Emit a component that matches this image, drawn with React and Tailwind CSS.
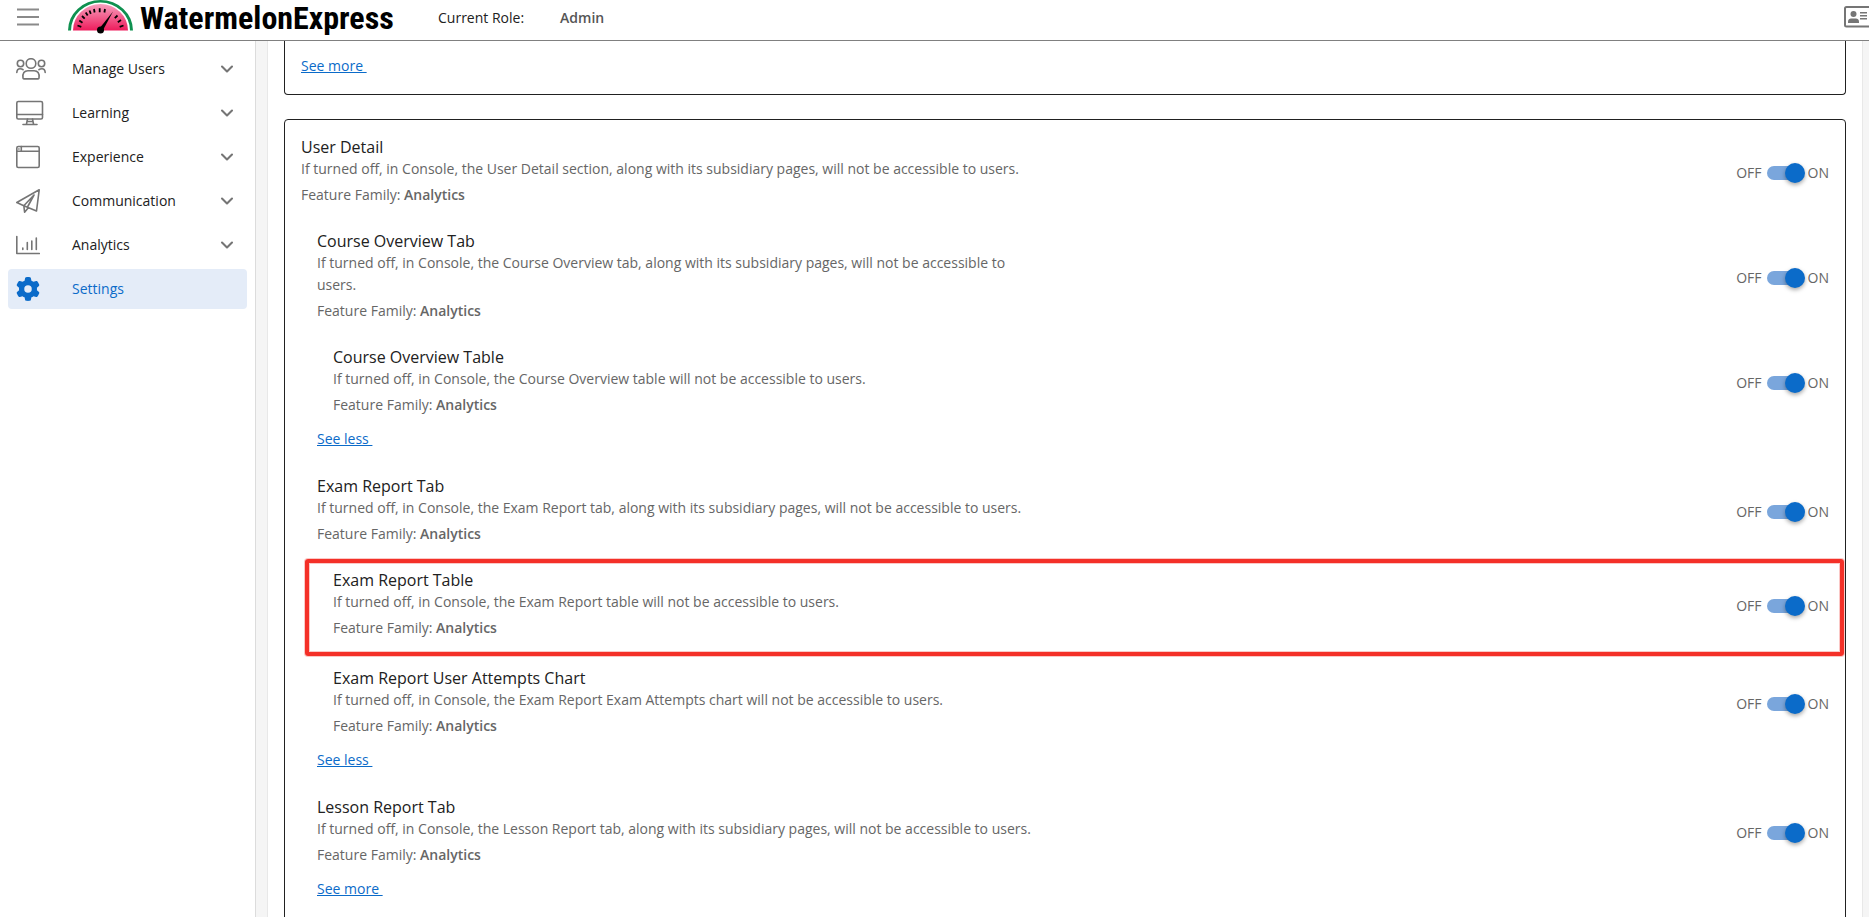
import { useId, useState } from 'react'
import { ChevronDown } from 'lucide-react'
import { FaGear } from 'react-icons/fa6'

const stroke = {
  fill: 'none',
  stroke: '#757575',
  strokeWidth: 1.6,
  strokeLinecap: 'round',
  strokeLinejoin: 'round',
}

function UsersIcon() {
  return (
    <svg width="30" height="22" viewBox="0 0 30 22" {...stroke}>
      <circle cx="15" cy="5.5" r="4.8" />
      <circle cx="4.500" cy="5.500" r="3.200" />
      <circle cx="25.500" cy="5.500" r="3.200" />
      <path d="M7 20.200c-.8-5 1.500-7.500 4.800-7.500h6.400c3.300 0 5.600 2.500 4.800 7.500-.1.500-.4.700-.9.700H7.900c-.5 0-.8-.2-.9-.7z" />
      <path d="M.8 14.500c.2-2.600 1.400-3.700 3.200-3.700 1.400 0 2.200.2 3 .9M29.200 14.500c-.2-2.600-1.400-3.700-3.200-3.700-1.400 0-2.200.2-3 .9" />
    </svg>
  )
}

function MonitorIcon() {
  return (
    <svg width="28" height="26" viewBox="0 0 28 26" {...stroke}>
      <rect x="0.800" y="1.500" width="25.700" height="17.500" rx="1.500" />
      <path d="M.8 14.500h25.700M11.500 19l-1 5M16.500 19l1 5M7 24.500h14M12 21.500h4" />
    </svg>
  )
}

function WindowIcon() {
  return (
    <svg width="24" height="24" viewBox="0 0 24 24" {...stroke}>
      <rect x="0.800" y="1.500" width="22.400" height="21" rx="1.500" />
      <path d="M.8 6.300h22.400M5.300 1.500v4.800M2.800 4h.2" />
    </svg>
  )
}

function PlaneIcon() {
  return (
    <svg width="24" height="24" viewBox="0 0 24 24" {...stroke}>
      <path d="M23.200.8L.8 13.500l7 3.200L20.500 22zM18 6L7.800 16.700l.8 6.500 3.900-4.700M18 6l-6.500 12" />
    </svg>
  )
}

function ChartIcon() {
  return (
    <svg width="24" height="24" viewBox="0 0 24 24" {...stroke}>
      <path d="M.8 3.500v17h22.500" />
      <path d="M6.800 15v1.500M11.300 9.500v7M15.800 8v8.500M20.300 5v11.500" />
    </svg>
  )
}

function GearIcon() {
  return <FaGear size={24} />
}

function Logo() {
  return (
    <svg width="66" height="34" viewBox="0 0 66 34" className="shrink-0">
      <defs>
        <linearGradient id="melon" x1="0" y1="0" x2="0" y2="1">
          <stop offset="0" stopColor="#f7a0be" />
          <stop offset="1" stopColor="#ee1c5c" />
        </linearGradient>
      </defs>
      <path d="M0 30.500a32.500 30.500 0 0 1 65 0h-3a29.500 28 0 0 0-59 0z" fill="#0f9150" />
      <path d="M5 30.500a27.500 26.500 0 0 1 55 0z" fill="url(#melon)" />
      <g stroke="#000" strokeWidth="1.800">
        <path d="M9.500 25.500l3.800 1.300M11.300 20.500l3.200 2.200M14 16l2.700 2.700M17.700 12.500l2 3M21.500 10.500l1.300 3.300M26 9l.6 3.500M31.700 8.300v4M37 9l-.6 3.500M49.500 15.500l-2.700 2.700M53 20l-3.200 2.200M55.500 25.500l-3.800 1.300" />
      </g>
      <path d="M45 11.500L34.500 31l-3.500-2z" fill="#000" />
      <circle cx="32.500" cy="30" r="3.500" fill="#000" />
    </svg>
  )
}

function IdCard() {
  return (
    <svg width="31" height="22" viewBox="0 0 31 22" fill="#757575">
      <rect x="1" y="1" width="29" height="19.500" rx="1.500" fill="none" stroke="#757575" strokeWidth="2" />
      <circle cx="9.500" cy="8" r="3" />
      <path d="M4 17v-1.500c0-2 1.500-3 3-3h5c1.500 0 3 1 3 3V17z" />
      <path d="M16 6h7v1.500h-7zM16 9h7v1.500h-7zM16 12h7v1.500h-7z" />
    </svg>
  )
}

const NAV = [
  { label: 'Manage Users', icon: UsersIcon },
  { label: 'Learning', icon: MonitorIcon },
  { label: 'Experience', icon: WindowIcon },
  { label: 'Communication', icon: PlaneIcon },
  { label: 'Analytics', icon: ChartIcon },
  { label: 'Settings', icon: GearIcon, active: true },
]

function NavItem({ label, icon: Icon, active }) {
  return (
    <button
      className={`flex h-10 w-full items-center rounded-sm pr-[10px] pl-2 text-left ${
        active ? 'bg-[#e4ecf8] text-[#0b6bc9]' : 'text-[#212121]'
      }`}
    >
      <span className="w-14 shrink-0">
        <Icon />
      </span>
      <span className="flex-1">{label}</span>
      {!active && <ChevronDown size={20} strokeWidth={2.5} className="text-[#757575]" />}
    </button>
  )
}

function Toggle({ name }) {
  const id = useId()
  const [on, setOn] = useState(true)
  return (
    <div className="flex items-center text-[#666666]">
      <span className="mr-[5px]">OFF</span>
      <input
        id={id}
        type="checkbox"
        role="switch"
        aria-label={name}
        checked={on}
        onChange={e => setOn(e.target.checked)}
        className="relative mr-[7px] h-[14px] w-[34px] appearance-none rounded-full bg-gray-400 checked:bg-[#7aa6dc] before:absolute before:-top-[3px] before:-left-1 before:size-5 before:rounded-full before:bg-gray-100 before:shadow-[0_2px_4px_rgba(0,0,0,0.35)] checked:before:left-[18px] checked:before:bg-[#0b6bc9]"
      />
      <label htmlFor={id}>ON</label>
    </div>
  )
}

function Feature({ title, text, marked }) {
  return (
    <div className="relative flex items-center justify-between">
      <div className="w-1/2 pr-8 pb-1">
        <h3 className="text-base leading-[22px] text-[#212121]">{title}</h3>
        <p>{text}</p>
        <p className="mt-1">
          Feature Family: <b className="font-semibold">Analytics</b>
        </p>
      </div>
      <Toggle name={title} />
      {marked && (
        <div className="pointer-events-none absolute -top-[10px] -right-[15px] -bottom-[13px] -left-7 rounded-[3px] border-4 border-[#f43028] shadow-[0_0_0_1px_#fbc8c6,inset_0_0_0_1px_#fbc8c6]" />
      )}
    </div>
  )
}

function SeeLink({ children }) {
  return (
    <a href="#" className="mt-2 block w-fit whitespace-pre text-[#0b6bc9] underline">
      {children + ' '}
    </a>
  )
}

export default function App() {
  return (
    <div className="flex h-screen flex-col overflow-hidden bg-white font-['Open_Sans',sans-serif] text-sm leading-[22px] text-[#666666]">
      {/* Top bar */}
      <header className="flex h-[41px] shrink-0 items-start overflow-hidden border-b border-[#808080]">
        <button aria-label="Toggle menu" className="mt-2 ml-[17px]">
          <svg width="22" height="18" viewBox="0 0 22 18" stroke="#8a8a8a" strokeWidth="2">
            <path d="M0 1.500h22M0 9h22M0 16.500h22" />
          </svg>
        </button>
        <div className="ml-[29px] flex w-[370px] shrink-0 items-start">
          <Logo />
          <span className="ml-[6px] font-['Roboto_Condensed','Roboto',sans-serif] text-[32px] leading-9 font-bold text-black">
            WatermelonExpress
          </span>
        </div>
        <span className="mt-[7px] text-[#212121]">Current Role:</span>
        <b className="mt-[7px] ml-9 font-semibold text-[#555555]">Admin</b>
        <button aria-label="Profile" className="mt-[6px] -mr-[6px] ml-auto">
          <IdCard />
        </button>
      </header>

      <div className="flex min-h-0 flex-1">
        {/* Sidebar */}
        <nav className="flex w-64 shrink-0 flex-col gap-1 border-r border-[#dcdcdc] p-2">
          {NAV.map(item => (
            <NavItem key={item.label} {...item} />
          ))}
        </nav>

        {/* Feature settings */}
        <main className="min-w-0 flex-1 overflow-hidden bg-[#f5f5f5] pr-[6px] pl-[11px]">
          <div className="border-x border-[#e8e8e8] bg-white px-4">
            <section className="rounded-b-[4px] border border-t-0 border-[#212121] px-4 pt-[6px] pb-[17px]">
              <SeeLink>See more</SeeLink>
            </section>

            <section className="mt-6 rounded-[4px] border border-[#212121] px-4 pt-4 pb-10">
              <Feature
                title="User Detail"
                text="If turned off, in Console, the User Detail section, along with its subsidiary pages, will not be accessible to users."
              />
              <div className="mt-5 flex flex-col gap-[25px] pl-4">
                <div>
                  <Feature
                    title="Course Overview Tab"
                    text="If turned off, in Console, the Course Overview tab, along with its subsidiary pages, will not be accessible to users."
                  />
                  <div className="mt-5 pl-4">
                    <Feature
                      title="Course Overview Table"
                      text="If turned off, in Console, the Course Overview table will not be accessible to users."
                    />
                  </div>
                  <SeeLink>See less</SeeLink>
                </div>
                <div>
                  <Feature
                    title="Exam Report Tab"
                    text="If turned off, in Console, the Exam Report tab, along with its subsidiary pages, will not be accessible to users."
                  />
                  <div className="mt-5 flex flex-col gap-6 pl-4">
                    <Feature
                      marked
                      title="Exam Report Table"
                      text="If turned off, in Console, the Exam Report table will not be accessible to users."
                    />
                    <Feature
                      title="Exam Report User Attempts Chart"
                      text="If turned off, in Console, the Exam Report Exam Attempts chart will not be accessible to users."
                    />
                  </div>
                  <SeeLink>See less</SeeLink>
                </div>
                <div>
                  <Feature
                    title="Lesson Report Tab"
                    text="If turned off, in Console, the Lesson Report tab, along with its subsidiary pages, will not be accessible to users."
                  />
                  <SeeLink>See more</SeeLink>
                </div>
              </div>
            </section>
          </div>
        </main>
      </div>
    </div>
  )
}
